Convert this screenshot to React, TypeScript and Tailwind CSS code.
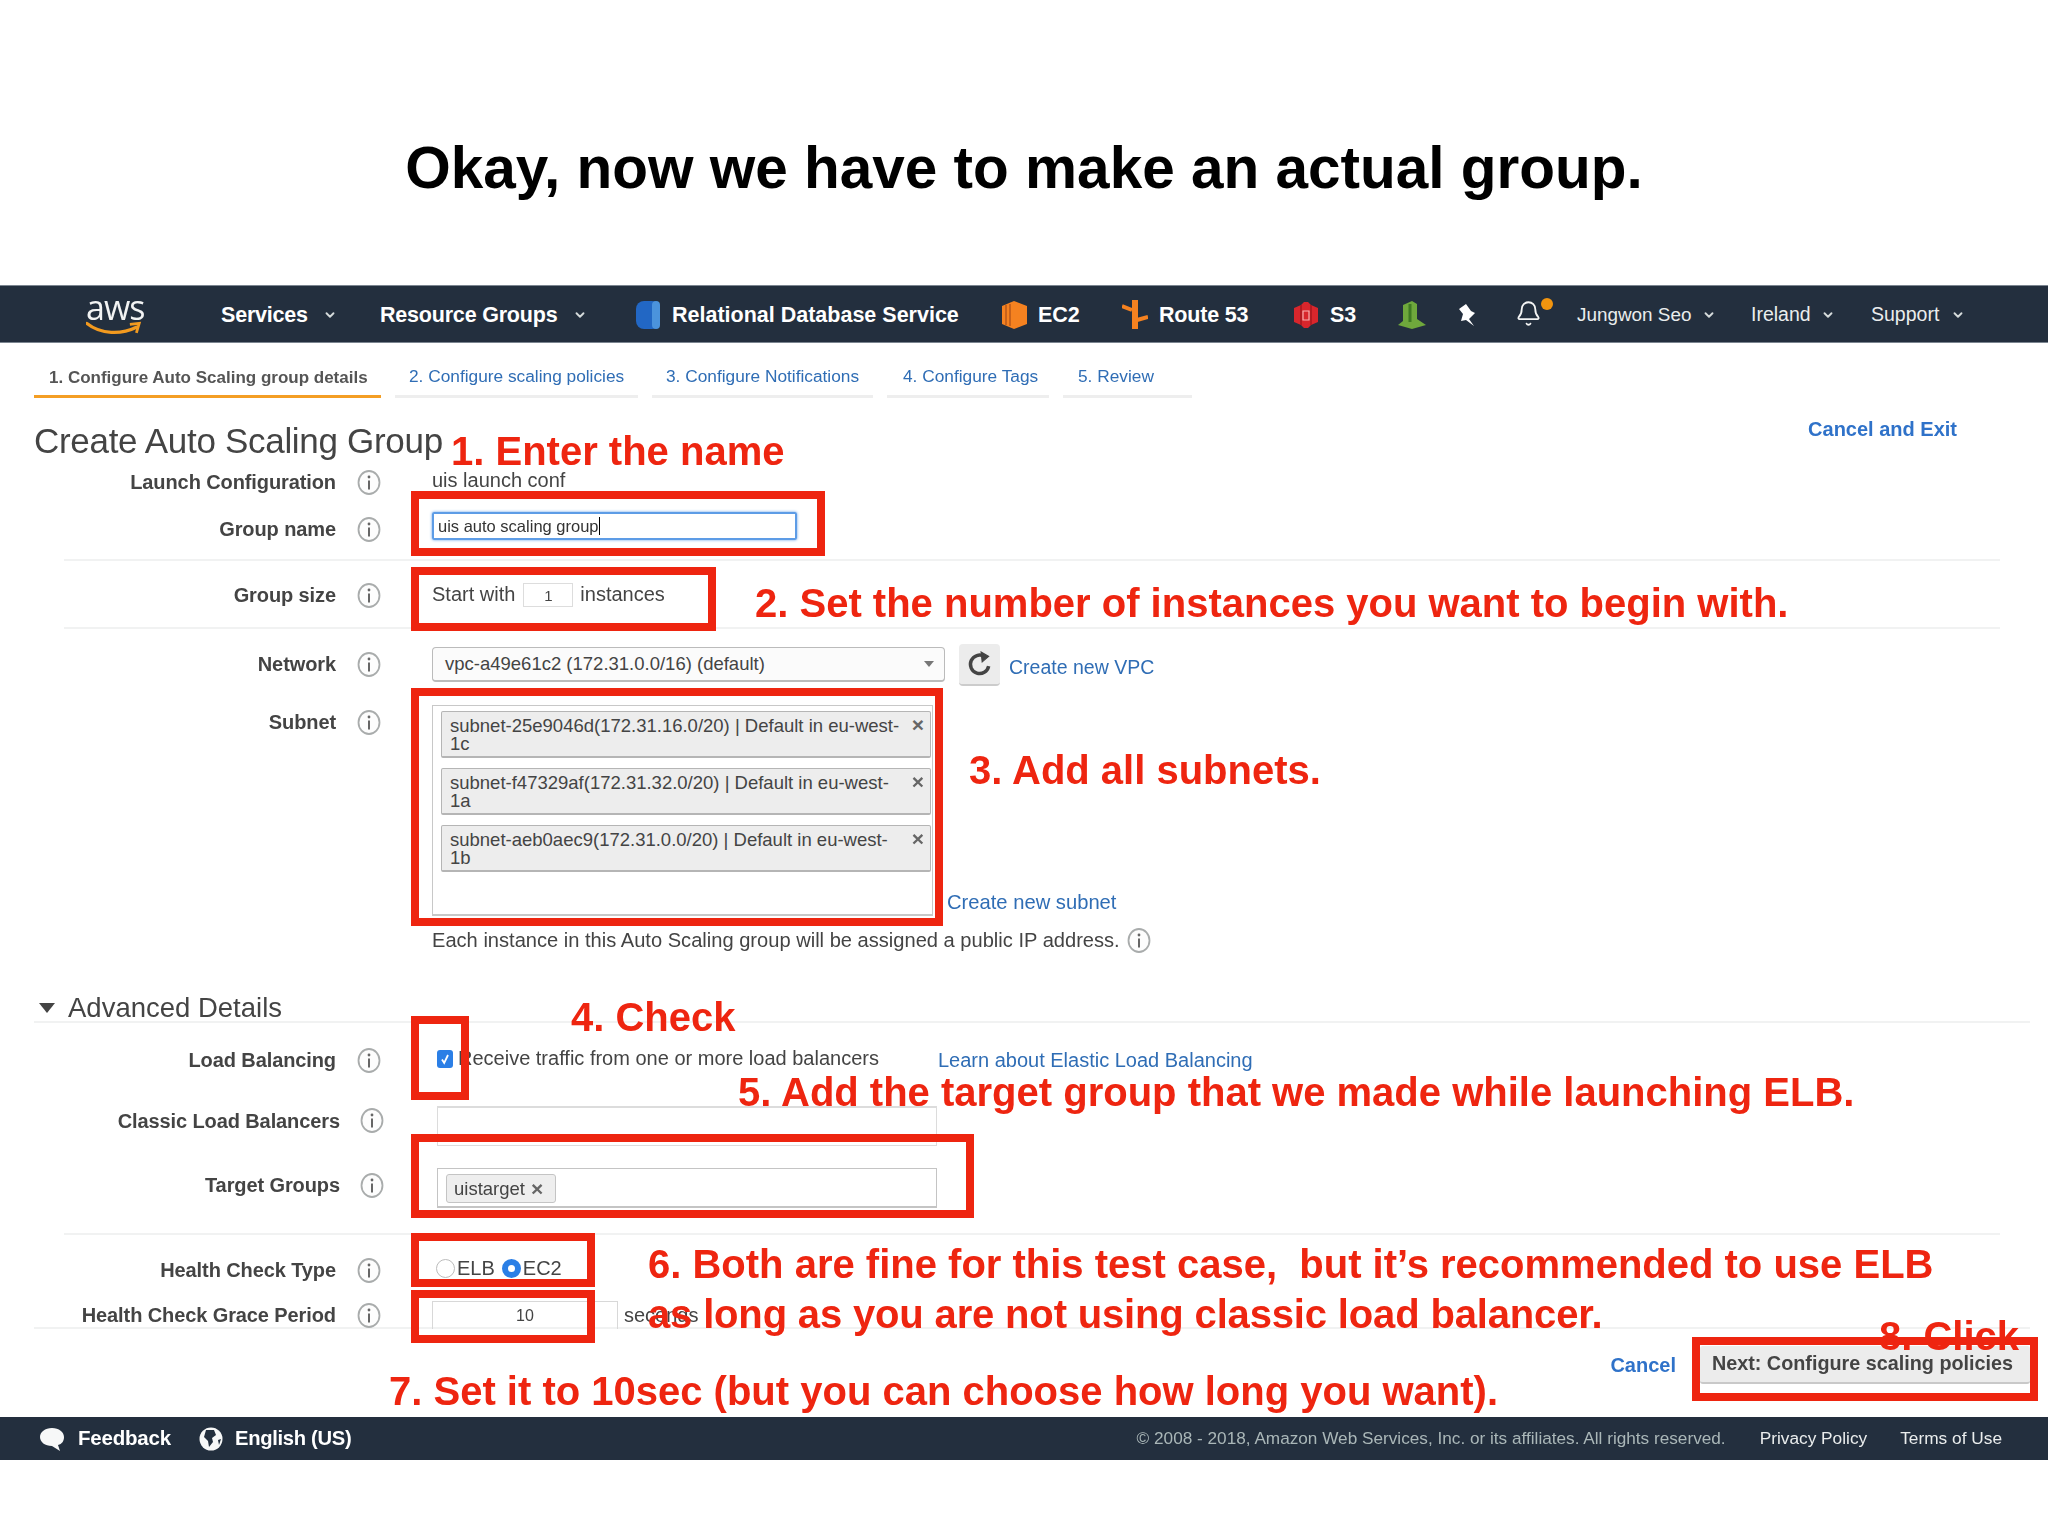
import React from "react";
import { Bell, ChevronDown } from "lucide-react";

const Info = () => (
  <svg width="24" height="25" viewBox="0 0 24 25" className="shrink-0">
    <ellipse cx="12" cy="12.5" rx="10.5" ry="11.5" fill="#fdfdfd" stroke="#a9acac" strokeWidth="1.8" />
    <circle cx="12" cy="7" r="1.4" fill="#666" />
    <rect x="11" y="10.5" width="2" height="9" fill="#666" />
  </svg>
);

const Caret = ({ cls = "" }: { cls?: string }) => (
  <ChevronDown size={14} strokeWidth={3.2} className={"text-[#d5dbdb] shrink-0 " + cls} />
);

const Label = ({ text, wide }: { text: string; wide?: boolean }) => (
  <div className={"flex items-center shrink-0 justify-end " + (wide ? "w-[384px]" : "w-[381px]")}>
    <span className="text-[20px] font-bold text-[#444] tracking-[-0.1px] whitespace-nowrap">{text}</span>
    <span className={wide ? "ml-[20px]" : "ml-[21px]"}>
      <Info />
    </span>
  </div>
);

const Divider = ({ cls }: { cls: string }) => <div className={"h-[2px] bg-[#f1f2f2] " + cls} />;

const Chip = ({ text, tail }: { text: string; tail: string }) => (
  <div className="relative h-[47px] w-[490px] rounded-[2px] border border-[#b5b5b5] border-b-2 bg-[#ededed] pl-[8px] pt-[1px] text-[18.5px] leading-[18px] text-[#444]">
    <div className="pt-[4px] whitespace-nowrap">{text}</div>
    <div>{tail}</div>
    <span className="absolute right-[6px] top-[4px] text-[21px] font-bold text-[#666]">×</span>
  </div>
);

const Box = ({ cls }: { cls: string }) => <div className={"absolute border-[8px] border-[#ee2510] " + cls} />;

const Note = ({ cls, children }: { cls: string; children: React.ReactNode }) => (
  <div className={"absolute whitespace-pre text-[40px] leading-[46px] font-bold text-[#ee2510] " + cls}>{children}</div>
);

const Tab = ({ w, label, on, pl }: { w: string; label: string; on?: boolean; pl: string }) => (
  <div
    className={
      "h-[55px] flex items-end pb-[5px] border-b-[3px] whitespace-nowrap " +
      w + " " + pl + " " +
      (on ? "border-[#f49e24] font-bold text-[#555] text-[17px]" : "border-[#eeeeee] text-[#2f6db5] text-[17.3px]")
    }
  >
    {label}
  </div>
);

export default function App() {
  return (
    <div className="relative w-[2048px] min-h-[1536px] bg-white font-['Liberation_Sans',Arial,sans-serif]">
      <div className="h-[285px] pt-[135px] text-center">
        <h1 className="text-[58.5px] leading-[66px] font-bold text-black">Okay, now we have to make an actual group.</h1>
      </div>

      <div className="blur-[0.45px]">
        {/* top nav */}
        <nav className="h-[58px] bg-[#232f3e] border-y border-[#7b8590] flex items-center pl-[86px] pt-[2px] text-white">
          <div className="w-[135px] relative h-[50px] -mt-[2px]">
            <span className="absolute left-0 -top-[7px] font-['Open_Sans',sans-serif] text-[34px] leading-[50px] tracking-[-1px] text-[#f2f3f3]">aws</span>
            <svg width="56" height="18" viewBox="0 0 60 18" className="absolute left-0 top-[32px]">
              <path d="M1 2 C16 14 38 14 54 6" fill="none" stroke="#f29a1f" strokeWidth="3.5" strokeLinecap="round" />
              <path d="M47 3 L57 2 L54 12" fill="none" stroke="#f29a1f" strokeWidth="3" />
            </svg>
          </div>
          <div className="w-[159px] flex items-center text-[21.5px] font-bold tracking-[-0.2px]">Services<Caret cls="ml-[15px]" /></div>
          <div className="w-[256px] flex items-center text-[21.5px] font-bold tracking-[-0.2px]">Resource Groups<Caret cls="ml-[16px]" /></div>
          <div className="w-[366px] flex items-center text-[21.5px] font-bold">
            <svg width="24" height="30" viewBox="0 0 24 30" className="shrink-0 mr-[12px]">
              <rect x="0" y="1" width="24" height="28" rx="8" fill="#2267c4" />
              <rect x="16" y="1" width="8" height="28" rx="4" fill="#4b93dc" />
            </svg>
            Relational Database Service
          </div>
          <div className="w-[120px] flex items-center text-[21.5px] font-bold">
            <svg width="25" height="28" viewBox="0 0 25 28" className="shrink-0 mr-[11px]">
              <path d="M12 0 L25 5 L25 23 L12 28 L0 23 L0 5 Z" fill="#f58220" />
              <path d="M4 4 V24 M8 3 V25" stroke="#b8581a" strokeWidth="1.5" />
            </svg>
            EC2
          </div>
          <div className="w-[172px] flex items-center text-[21.5px] font-bold tracking-[-0.2px]">
            <svg width="26" height="30" viewBox="0 0 26 30" className="shrink-0 mr-[11px]">
              <path d="M0 6 L10 10 M15 20 L26 17" stroke="#f58220" strokeWidth="4" />
              <rect x="10" y="0" width="6" height="29" fill="#f58220" />
            </svg>
            Route 53
          </div>
          <div className="w-[104px] flex items-center text-[21.5px] font-bold">
            <svg width="24" height="28" viewBox="0 0 24 28" className="shrink-0 mr-[12px]">
              <path d="M0 7 L7 4 L10 1 L14 1 L17 4 L24 7 V21 L17 24 L14 27 L10 27 L7 24 L0 21 Z" fill="#d8262c" />
              <path d="M7 4 V24 M17 4 V24" stroke="#a81a20" strokeWidth="1.6" />
              <path d="M9 10 H15 V19 H9 Z" fill="none" stroke="#f7b0b0" strokeWidth="1.2" />
            </svg>
            S3
          </div>
          <div className="w-[60px]">
            <svg width="28" height="28" viewBox="0 0 28 28">
              <path d="M0 24 L5 20 V4 L14 0 L19 3 V18 L28 24 L14 28 Z" fill="#6fa83c" />
              <path d="M12 3 V21" stroke="#3f7a22" strokeWidth="3" />
            </svg>
          </div>
          <div className="w-[60px]">
            <svg width="20" height="24" viewBox="0 0 20 24">
              <path d="M1 6 L8 1 L13 8 L17 10 L11 16 L16 23 L8 17 L3 18 L5 11 Z" fill="#fff" />
            </svg>
          </div>
          <div className="w-[59px] relative h-[30px]">
            <Bell size={27} strokeWidth={1.6} className="text-[#f4f5f5] -ml-[3px]" />
            <span className="absolute left-[23px] -top-[2px] h-[12px] w-[12px] rounded-full bg-[#f2950f]" />
          </div>
          <div className="w-[174px] flex items-center text-[18.9px] text-[#eaeded]">Jungwon Seo<Caret cls="ml-[11px]" /></div>
          <div className="w-[120px] flex items-center text-[19.5px] text-[#eaeded]">Ireland<Caret cls="ml-[10px]" /></div>
          <div className="flex items-center text-[19.5px] text-[#eaeded]">Support<Caret cls="ml-[12px]" /></div>
        </nav>

        {/* wizard tabs */}
        <div className="flex pl-[34px] gap-[14px]">
          <Tab w="w-[347px]" pl="pl-[15px]" label="1. Configure Auto Scaling group details" on />
          <Tab w="w-[243px]" pl="pl-[14px]" label="2. Configure scaling policies" />
          <Tab w="w-[221px]" pl="pl-[14px]" label="3. Configure Notifications" />
          <Tab w="w-[162px]" pl="pl-[16px]" label="4. Configure Tags" />
          <Tab w="w-[129px]" pl="pl-[15px]" label="5. Review" />
        </div>

        {/* heading */}
        <div className="h-[68px] pl-[34px] pr-[91px] flex justify-between">
          <h2 className="pt-[22px] text-[35px] leading-[42px] tracking-[-0.3px] text-[#444]">Create Auto Scaling Group</h2>
          <a className="pt-[19px] text-[20px] leading-[24px] font-bold text-[#2f72c9]">Cancel and Exit</a>
        </div>

        <div className="h-[31px] flex items-center pt-[1px]">
          <Label text="Launch Configuration" />
          <span className="ml-[51px] -mt-[4px] text-[20px] text-[#444]">uis launch conf</span>
        </div>

        <div className="h-[62px] flex pt-[14px]">
          <div className="h-[36px] flex items-center">
            <Label text="Group name" />
          </div>
          <div className="ml-[51px] h-[28px] mt-[1px] w-[365px] border-2 border-[#5d9ce6] rounded-[2px] shadow-[0_0_3px_#5d9ce6] pl-[4px] text-[16.5px] leading-[24px] text-[#333]">
            uis auto scaling group<span className="border-l border-black" />
          </div>
        </div>
        <Divider cls="ml-[64px] mr-[48px]" />

        <div className="h-[66px] flex items-center pt-[2px]">
          <Label text="Group size" />
          <span className="ml-[51px] -mt-[3px] text-[20px] text-[#444]">Start with</span>
          <div className="ml-[8px] -mt-[1px] h-[24px] w-[50px] border border-[#ddd] text-center text-[15px] leading-[24px] text-[#444]">1</div>
          <span className="ml-[7px] -mt-[3px] text-[20px] text-[#444]">instances</span>
        </div>
        <Divider cls="ml-[64px] mr-[48px]" />

        <div className="h-[70px] flex items-center">
          <Label text="Network" />
          <div className="relative ml-[51px] h-[35px] w-[513px] rounded-[4px] border border-[#bbb] border-b-2 bg-[#fbfbfb] pl-[12px] text-[18.5px] leading-[32px] text-[#444]">
            vpc-a49e61c2 (172.31.0.0/16) (default)
            <span className="absolute right-[10px] top-[13px] h-0 w-0 border-x-[5px] border-t-[6px] border-x-transparent border-t-[#777]" />
          </div>
          <div className="ml-[14px] mt-[2px] h-[42px] w-[41px] rounded-[4px] bg-[#ececec] border-b-2 border-[#ccc] flex items-center justify-center">
            <svg width="26" height="26" viewBox="0 0 24 24" fill="none" stroke="#444" strokeWidth="3.2">
              <path d="M20 14 A8.5 8.5 0 1 1 16 5" />
              <path d="M13 1 L20 5 L14 10 Z" fill="#444" strokeWidth="1" />
            </svg>
          </div>
          <a className="ml-[9px] mt-[8px] text-[19.5px] text-[#2f6db5]">Create new VPC</a>
        </div>

        <div className="flex pt-[6px]">
          <div className="h-[34px] flex items-center">
            <Label text="Subnet" />
          </div>
          <div className="ml-[51px] h-[211px] w-[501px] border border-[#c8c8c8] border-b-2 pl-[8px] pt-[5px] flex flex-col gap-[10px]">
            <Chip text="subnet-25e9046d(172.31.16.0/20) | Default in eu-west-" tail="1c" />
            <Chip text="subnet-f47329af(172.31.32.0/20) | Default in eu-west-" tail="1a" />
            <Chip text="subnet-aeb0aec9(172.31.0.0/20) | Default in eu-west-" tail="1b" />
          </div>
          <a className="ml-[14px] mt-[185px] text-[20.2px] leading-[24px] text-[#2f6db5] whitespace-nowrap">Create new subnet</a>
        </div>

        <div className="h-[48px] pl-[432px] flex items-center text-[20.1px] text-[#444]">
          Each instance in this Auto Scaling group will be assigned a public IP address.
          <span className="ml-[7px]"><Info /></span>
        </div>

        <div className="ml-[34px] mr-[18px] mt-[30px] h-[29px] border-b-2 border-[#f1f2f2] flex items-center">
          <span className="ml-[5px] h-0 w-0 border-x-[8px] border-t-[10px] border-x-transparent border-t-[#444]" />
          <span className="ml-[13px] text-[27.5px] text-[#444]">Advanced Details</span>
        </div>

        <div className="h-[74px] flex items-center">
          <Label text="Load Balancing" />
          <div className="ml-[56px] -mt-[2px] h-[18px] w-[16px] rounded-[3px] bg-[#2b7fe6] flex items-center justify-center">
            <svg width="10" height="12" viewBox="0 0 10 12"><path d="M2 6.5 L4.2 10 L8 2" fill="none" stroke="#fff" strokeWidth="1.8" /></svg>
          </div>
          <span className="ml-[5px] -mt-[4px] text-[20px] text-[#444]">Receive traffic from one or more load balancers</span>
          <a className="ml-[59px] text-[20px] text-[#2f6db5]">Learn about Elastic Load Balancing</a>
        </div>

        <div className="h-[47px] flex items-center">
          <Label text="Classic Load Balancers" wide />
          <div className="ml-[53px] mt-[10px] h-[40px] w-[500px] border border-[#dcdcdc] border-t-2" />
        </div>

        <div className="mt-[17px] h-[48px] flex items-center">
          <Label text="Target Groups" wide />
          <div className="ml-[53px] mt-[6px] h-[40px] w-[500px] border border-[#c4c4c4] border-b-2 pl-[8px] pt-[5px]">
            <div className="h-[29px] w-[110px] rounded-[3px] border border-[#c4c4c4] bg-[#eeeeee] pl-[7px] text-[18.5px] leading-[27px] text-[#444] flex items-center">
              uistarget
              <span className="ml-[6px] text-[21px] font-bold text-[#666]">×</span>
            </div>
          </div>
        </div>

        <Divider cls="ml-[64px] mr-[48px] mt-[24px]" />

        <div className="h-[68px] pt-[2px] flex items-center">
          <Label text="Health Check Type" />
          <div className="ml-[55px] -mt-[4px] flex items-center text-[20px] text-[#444]">
            <span className="h-[19px] w-[19px] rounded-full border border-[#bbb] bg-white" />
            <span className="ml-[2px]">ELB</span>
            <span className="ml-[7px] h-[19px] w-[19px] rounded-full border-[6px] border-[#2b7fe6] bg-white" />
            <span className="ml-[2px]">EC2</span>
          </div>
        </div>

        <div className="h-[24px] flex items-center">
          <Label text="Health Check Grace Period" />
          <div className="ml-[51px] h-[28px] w-[186px] shrink-0 border-x border-t border-[#d8d8d8] text-center text-[16px] leading-[28px] text-[#444]">10</div>
          <span className="ml-[6px] text-[20px] text-[#444]">seconds</span>
        </div>
        <Divider cls="ml-[34px] mr-[18px]" />

        <div className="h-[88px] flex items-start justify-end pr-[18px] pt-[17px]">
          <a className="mt-[4px] text-[20px] font-bold text-[#2f72c9]">Cancel</a>
          <button className="ml-[24px] h-[38px] w-[330px] rounded-[3px] border-b-2 border-[#c9c9c9] bg-[#ececec] pr-[5px] text-[19.8px] font-bold text-[#444]">Next: Configure scaling policies</button>
        </div>

        {/* footer */}
        <footer className="h-[43px] bg-[#232f3e] flex items-center pl-[39px] pr-[46px] text-white">
          <svg width="26" height="26" viewBox="0 0 26 26" className="shrink-0">
            <path d="M13 2 C20 2 25 6 25 11 C25 15 23 18 19 19 L21 25 L13 20 C6 20 1 16 1 11 C1 6 6 2 13 2 Z" fill="#f7f8f8" />
          </svg>
          <span className="ml-[13px] text-[20.5px] font-bold tracking-[-0.2px]">Feedback</span>
          <svg width="24" height="24" viewBox="0 0 24 24" className="ml-[28px] shrink-0">
            <circle cx="12" cy="12" r="11.5" fill="#f7f8f8" />
            <path d="M7 3 L15 3 L17 8 L13 11 L14 15 L10 20 L9 14 L5 10 Z" fill="#232f3e" />
            <path d="M19 13 L22 12 L20 18 Z" fill="#232f3e" />
          </svg>
          <span className="ml-[12px] text-[20.2px] font-bold tracking-[-0.3px]">English (US)</span>
          <span className="ml-auto text-[17.2px] text-[#aab7b8]">© 2008 - 2018, Amazon Web Services, Inc. or its affiliates. All rights reserved.</span>
          <span className="ml-[34px] text-[17.3px] text-[#eaeded]">Privacy Policy</span>
          <span className="ml-[33px] text-[17.3px] text-[#eaeded]">Terms of Use</span>
        </footer>
      </div>

      {/* red annotations drawn over the screenshot */}
      <Box cls="left-[411px] top-[491px] w-[414px] h-[65px]" />
      <Box cls="left-[411px] top-[567px] w-[305px] h-[64px]" />
      <Box cls="left-[411px] top-[688px] w-[532px] h-[238px]" />
      <Box cls="left-[411px] top-[1016px] w-[58px] h-[84px]" />
      <Box cls="left-[411px] top-[1134px] w-[563px] h-[84px]" />
      <Box cls="left-[411px] top-[1233px] w-[184px] h-[54px]" />
      <Box cls="left-[411px] top-[1290px] w-[184px] h-[53px]" />
      <Box cls="left-[1692px] top-[1337px] w-[346px] h-[64px]" />

      <Note cls="left-[451px] top-[428px]">1. Enter the name</Note>
      <Note cls="left-[755px] top-[580px]">2. Set the number of instances you want to begin with.</Note>
      <Note cls="left-[969px] top-[747px]">3. Add all subnets.</Note>
      <Note cls="left-[571px] top-[994px]">4. Check</Note>
      <Note cls="left-[738px] top-[1069px]">5. Add the target group that we made while launching ELB.</Note>
      <Note cls="left-[648px] top-[1241px]">6. Both are fine for this test case,  but it’s recommended to use ELB</Note>
      <Note cls="left-[648px] top-[1291px] tracking-[-0.16px]">as long as you are not using classic load balancer.</Note>
      <Note cls="left-[389px] top-[1368px]">7. Set it to 10sec (but you can choose how long you want).</Note>
      <Note cls="left-[1879px] top-[1313px]">8. Click</Note>
    </div>
  );
}
